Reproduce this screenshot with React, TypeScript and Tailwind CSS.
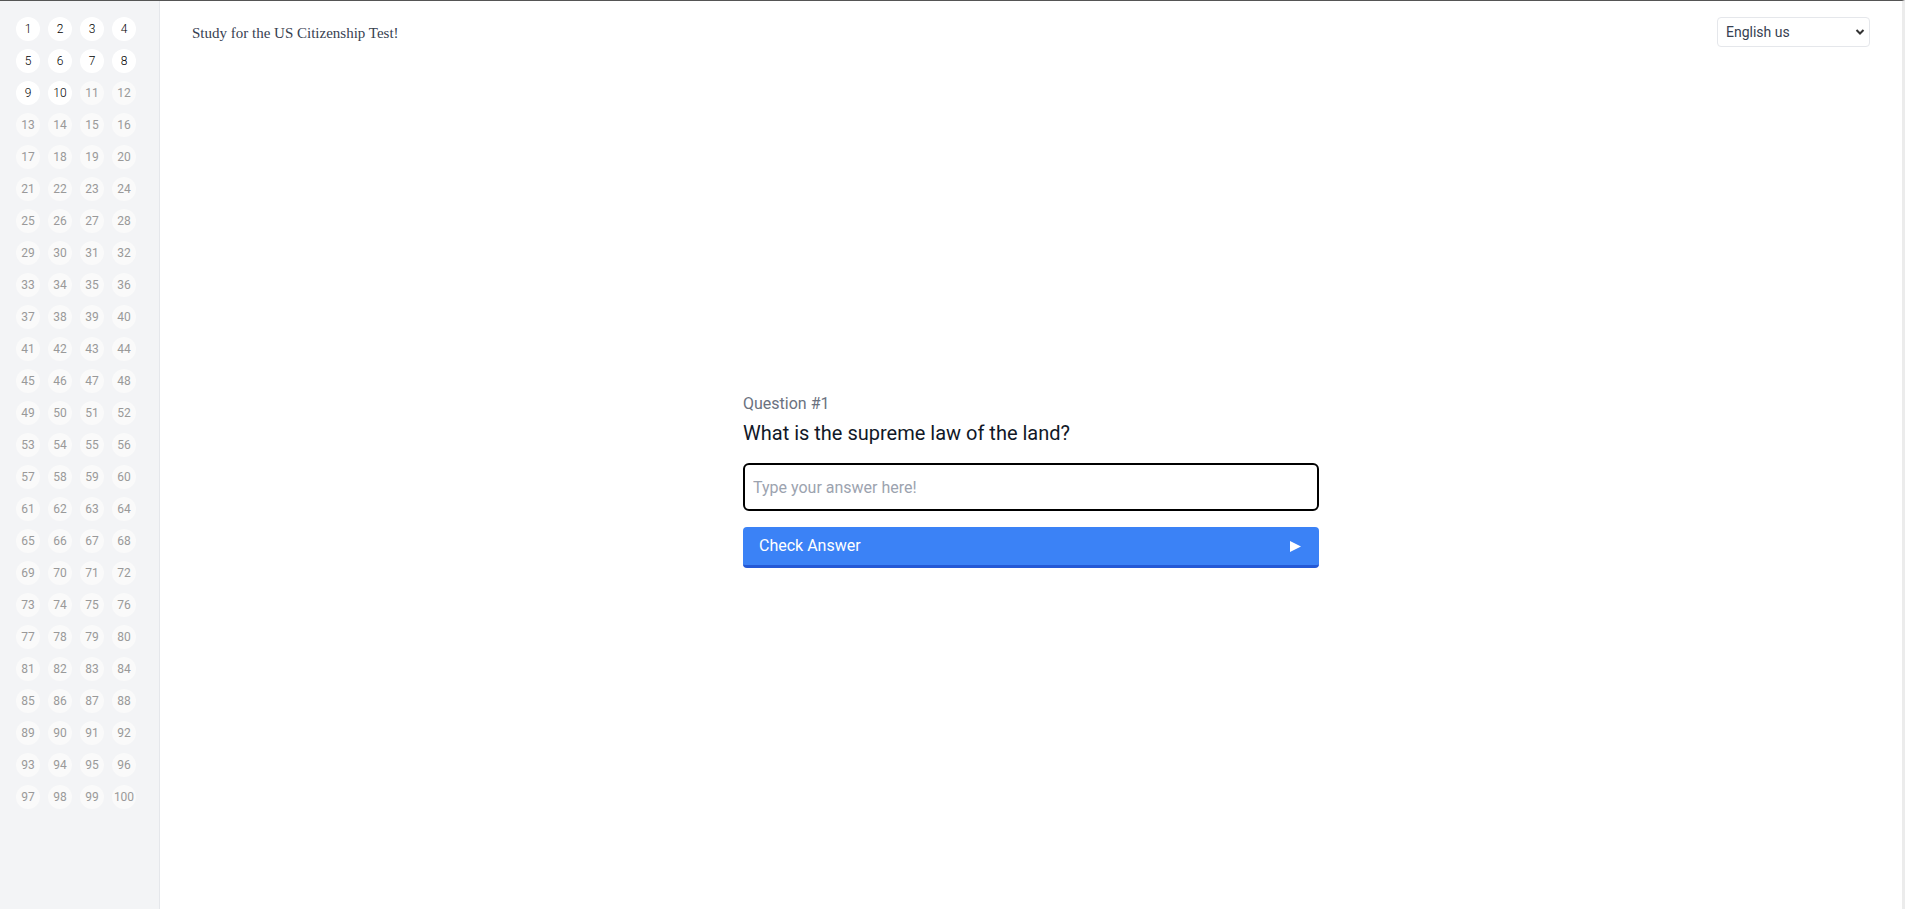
import React, { useState } from 'react';

const sans = 'Roboto, "Noto Sans", sans-serif';

function QuestionGrid({ answered }: { answered: number }) {
  const numbers = Array.from({ length: 100 }, (_, i) => i + 1);
  return (
    <div className="grid grid-cols-4 gap-2 w-max">
      {numbers.map(n => (
        <button
          key={n}
          className={
            n <= answered
              ? 'w-6 h-6 rounded-full bg-white text-black text-xs font-light flex items-center justify-center'
              : 'w-6 h-6 rounded-full bg-[#fafafa] text-[#999999] text-xs font-normal flex items-center justify-center'
          }
        >
          {n}
        </button>
      ))}
    </div>
  );
}

export default function App() {
  const [answer, setAnswer] = useState('');
  const [lang, setLang] = useState('en-us');

  return (
    <div className="h-screen flex border-t border-[#555555] border-r-[3px] border-r-[#ececec] bg-white overflow-hidden" style={{ fontFamily: sans }}>
      <aside className="w-40 shrink-0 bg-[#f3f4f6] border-r border-[#e5e7eb] pt-4 pl-4">
        <QuestionGrid answered={10} />
      </aside>

      <main className="flex-1 flex flex-col">
        <header className="flex items-center justify-between px-8 pt-4 pb-4">
          <h1 className="text-[15px] text-[#374151] pt-[3px]" style={{ fontFamily: '"Liberation Serif", serif' }}>
            Study for the US Citizenship Test!
          </h1>
          <div className="relative">
            <select
              value={lang}
              onChange={e => setLang(e.target.value)}
              className="appearance-none w-[153px] h-[30px] pl-2 pr-6 text-sm text-[#374151] bg-white border border-[#e5e7eb] rounded-[4px] outline-none"
            >
              <option value="en-us">English us</option>
              <option value="es">Español</option>
            </select>
            <svg className="absolute right-[5px] top-[11px] w-[10px] h-[8px] pointer-events-none" viewBox="0 0 10 8">
              <path d="M1.5 2 L5 5.5 L8.5 2" fill="none" stroke="#333" strokeWidth="2" />
            </svg>
          </div>
        </header>

        <div className="flex-1 flex items-center justify-center pb-[12px]">
          <div className="w-full max-w-xl">
            <p className="text-base text-[#6b7280]">Question #1</p>
            <h2 className="text-xl text-[#111827] mt-[3px] mb-4">What is the supreme law of the land?</h2>
            <input
              autoFocus
              type="text"
              value={answer}
              onChange={e => setAnswer(e.target.value)}
              placeholder="Type your answer here!"
              className="w-full h-12 px-2 text-base border-2 border-black rounded-md outline-none placeholder:text-[#9ca3af]"
            />
            <button className="mt-4 w-full h-[41px] flex items-center justify-between pl-4 pr-[18px] bg-[#3b82f6] border-b-[3px] border-[#2459d6] rounded-[4px] text-white text-base">
              <span>Check Answer</span>
              <svg className="w-[11px] h-[11px]" viewBox="0 0 10 10">
                <polygon points="0,0 10,5 0,10" fill="white" />
              </svg>
            </button>
          </div>
        </div>
      </main>
    </div>
  );
}
